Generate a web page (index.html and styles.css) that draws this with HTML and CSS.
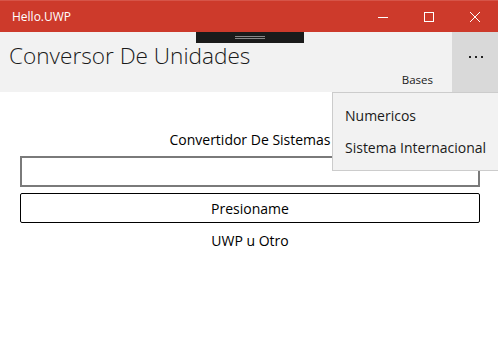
FILE: index.html
```html
<!DOCTYPE html>
<html lang="es">
<head>
    <meta charset="UTF-8">
    <meta name="viewport" content="width=device-width, initial-scale=1.0">
    <title>Hello.UWP</title>
    <link rel="stylesheet" href="styles.css">
</head>
<body>
    <div class="titlebar">
        <span class="app-name">Hello.UWP</span>
        <div class="caption-buttons">
            <span class="caption-btn">
                <svg width="10" height="10" viewBox="0 0 10 10"><path d="M0 5.5h10" stroke="#fff" stroke-width="1"/></svg>
            </span>
            <span class="caption-btn">
                <svg width="10" height="10" viewBox="0 0 10 10"><rect x="0.5" y="0.5" width="9" height="9" fill="none" stroke="#fff" stroke-width="1"/></svg>
            </span>
            <span class="caption-btn">
                <svg width="10" height="10" viewBox="0 0 10 10"><path d="M0 0L10 10M10 0L0 10" stroke="#fff" stroke-width="1"/></svg>
            </span>
        </div>
    </div>

    <div class="appbar">
        <div class="handle"><span></span><span></span></div>
        <h1 class="page-title">Conversor De Unidades</h1>
        <div class="appbar-right">
            <span class="appbar-label">Bases</span>
            <button class="more-btn" aria-label="Más"><i></i><i></i><i></i></button>
        </div>
    </div>

    <main class="content">
        <p class="caption">Convertidor De Sistemas</p>
        <input type="text" class="textbox">
        <button class="btn">Presioname</button>
        <p class="caption">UWP u Otro</p>
    </main>

    <ul class="flyout">
        <li>Numericos</li>
        <li>Sistema Internacional</li>
    </ul>
</body>
</html>
```

FILE: styles.css
```css
body { margin: 0; font-family: "Open Sans", "Noto Sans", sans-serif; color: #000; background: #fff; position: relative; width: 498px; height: 348px; overflow: hidden; }

.titlebar { height: 32px; background: #cd3a2b; border-top: 1px solid #d65448; box-sizing: border-box; display: flex; align-items: center; justify-content: space-between; color: #fff; }
.app-name { font-size: 12px; margin-left: 12px; }
.caption-buttons { display: flex; height: 100%; }
.caption-btn { width: 46px; display: flex; align-items: center; justify-content: center; }
.caption-btn svg { display: block; }

.appbar { position: relative; height: 60px; background: #f2f2f2; display: flex; justify-content: space-between; }
.handle { position: absolute; left: 196px; top: 0; width: 108px; height: 11px; background: #1b1b1b; display: flex; flex-direction: column; align-items: center; padding-top: 4px; box-sizing: border-box; gap: 1px; }
.handle span { width: 30px; height: 1px; background: #888; }
.page-title { margin: 8px 0 0 9px; font-size: 22.6px; font-weight: 300; line-height: 32px; color: #1a1a1a; }
.appbar-right { display: flex; }
.appbar-label { font-size: 11.5px; align-self: flex-end; margin: 0 19px 5px 0; color: #1a1a1a; }
.more-btn { width: 46px; height: 60px; border: 0; padding: 0 0 0 1px; background: #d9d9d9; display: flex; justify-content: center; align-items: center; gap: 4px; padding-bottom: 10px; }
.more-btn i { width: 2px; height: 2px; background: #222; }

.content { padding: 38px 18px 0 20px; text-align: center; font-size: 14px; }
.caption { margin: 0; line-height: 20px; }
.textbox { display: block; width: 100%; height: 31px; box-sizing: border-box; border: 2px solid #7a7a7a; margin: 6px 0 6px; background: #fff; }
.btn { display: block; width: 100%; height: 30px; box-sizing: border-box; border: 1px solid #000; border-radius: 2px; background: #fff; font: inherit; font-size: 14px; margin-bottom: 8px; padding: 0; }

.flyout { position: absolute; top: 92px; right: 0; width: 166px; height: 79px; box-sizing: border-box; margin: 0; padding: 13px 0 0 12px; list-style: none; background: #f2f2f2; border: 1px solid #cccccc; border-right: 0; font-size: 14px; }
.flyout li { line-height: 20px; margin-bottom: 12px; color: #1a1a1a; }
```
